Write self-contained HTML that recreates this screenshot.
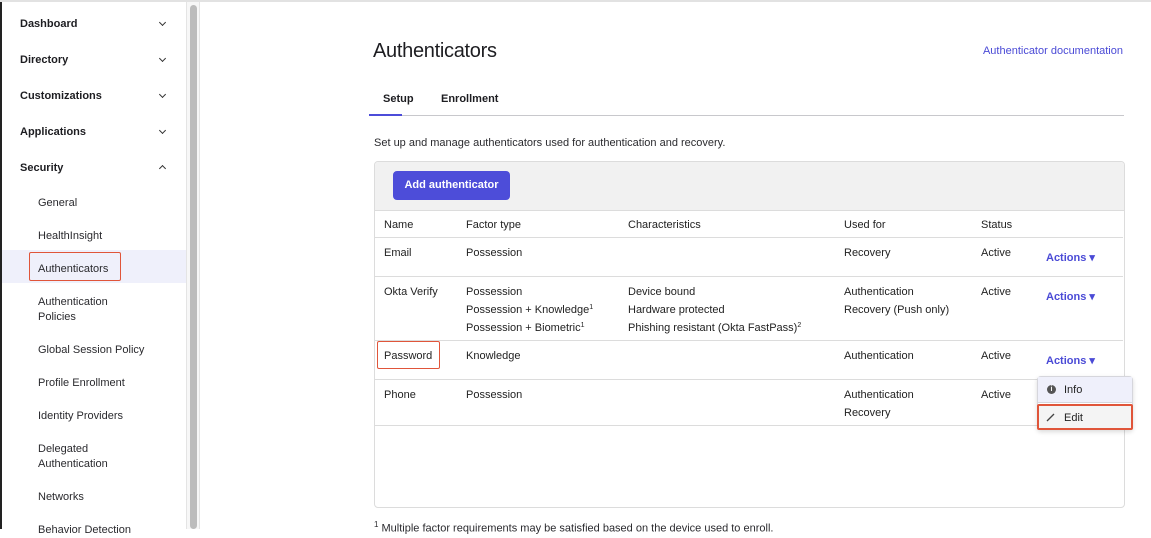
<!DOCTYPE html>
<html><head><meta charset="utf-8"><style>
*{margin:0;padding:0;box-sizing:border-box}
body{width:1151px;height:529px;overflow:hidden;background:#fff;font-family:"Liberation Sans",Arial,sans-serif;color:#1d1d21;position:relative;font-size:11px}
.a{position:absolute;white-space:nowrap}
.nav{font-weight:bold;font-size:11px;left:20px}
.chev{position:absolute;left:160px;width:5px;height:5px;border-right:1.2px solid #333;border-bottom:1.2px solid #333;transform:rotate(45deg)}
.sub{left:38px;font-size:11px;color:#2a2a2e;line-height:15px}
.c{position:absolute;font-size:11px;line-height:18px;color:#222}
.c sup{font-size:7px;line-height:0;vertical-align:4px}
.act{color:#4a4ad6;font-weight:bold;font-size:11px}
.hl{position:absolute;height:1px;background:#dcdcdc;left:375px;width:748px}
</style></head><body>
<div class="a" style="left:0;top:0;width:2px;height:529px;background:#222"></div>
<div class="a" style="left:0;top:0;width:1151px;height:2px;background:#e2e2e2"></div>
<!-- sidebar -->
<div class="a" style="left:2px;top:250px;width:184px;height:33px;background:#eff0fb"></div>
<div class="a nav" style="top:18px">Dashboard</div><div class="chev" style="top:20px"></div>
<div class="a nav" style="top:54px">Directory</div><div class="chev" style="top:56px"></div>
<div class="a nav" style="top:90px">Customizations</div><div class="chev" style="top:92px"></div>
<div class="a nav" style="top:126px">Applications</div><div class="chev" style="top:128px"></div>
<div class="a nav" style="top:162px">Security</div><div class="chev" style="top:166px;transform:rotate(225deg)"></div>
<div class="a sub" style="top:196px">General</div>
<div class="a sub" style="top:229px">HealthInsight</div>
<div class="a sub" style="top:262px">Authenticators</div>
<div class="a" style="left:29px;top:252px;width:92px;height:29px;border:1.5px solid #e0553a;border-radius:2px"></div>
<div class="a sub" style="top:295px">Authentication<br>Policies</div>
<div class="a sub" style="top:343px">Global Session Policy</div>
<div class="a sub" style="top:376px">Profile Enrollment</div>
<div class="a sub" style="top:409px">Identity Providers</div>
<div class="a sub" style="top:442px">Delegated<br>Authentication</div>
<div class="a sub" style="top:490px">Networks</div>
<div class="a sub" style="top:523px">Behavior Detection</div>
<div class="a" style="left:186px;top:2px;width:14px;height:527px;background:#f7f7f7;border-left:1px solid #e4e4e4;border-right:1px solid #e4e4e4"></div>
<div class="a" style="left:190px;top:5px;width:7px;height:524px;background:#bcbcbc;border-radius:4px"></div>
<!-- main -->
<div class="a" style="left:373px;top:40px;font-size:20px;color:#1d1d21;letter-spacing:-0.3px">Authenticators</div>
<div class="a" style="right:28px;top:45px;font-size:11px;color:#4a4ad6">Authenticator documentation</div>
<div class="a" style="left:383px;top:93px;font-weight:bold;font-size:11px">Setup</div>
<div class="a" style="left:441px;top:93px;font-weight:bold;font-size:11px">Enrollment</div>
<div class="a" style="left:374px;top:115px;width:750px;height:1px;background:#c8c8cc"></div>
<div class="a" style="left:369px;top:114px;width:33px;height:2px;background:#4c4cd9"></div>
<div class="a" style="left:374px;top:137px;font-size:11px;color:#2a2a2e">Set up and manage authenticators used for authentication and recovery.</div>
<div class="a" style="left:374px;top:161px;width:751px;height:347px;border:1px solid #dcdcdc;border-radius:4px;overflow:hidden">
 <div style="height:49px;background:#f1f1f1;border-bottom:1px solid #dcdcdc"></div>
</div>
<div class="a" style="left:393px;top:171px;width:117px;height:29px;background:#4d4dd9;border-radius:4px;color:#fff;font-weight:bold;font-size:11px;text-align:center;line-height:29px">Add authenticator</div>
<div class="hl" style="top:237px"></div>
<div class="hl" style="top:276px"></div>
<div class="hl" style="top:340px"></div>
<div class="hl" style="top:379px"></div>
<div class="hl" style="top:425px"></div>
<div class="c" style="left:384px;top:216px">Name</div>
<div class="c" style="left:466px;top:216px">Factor type</div>
<div class="c" style="left:628px;top:216px">Characteristics</div>
<div class="c" style="left:844px;top:216px">Used for</div>
<div class="c" style="left:981px;top:216px">Status</div>

<div class="c" style="left:384px;top:244px">Email</div>
<div class="c" style="left:466px;top:244px">Possession</div>
<div class="c" style="left:844px;top:244px">Recovery</div>
<div class="c" style="left:981px;top:244px">Active</div>
<div class="c act" style="left:1046px;top:249px">Actions &#9662;</div>

<div class="c" style="left:384px;top:283px">Okta Verify</div>
<div class="c" style="left:466px;top:283px">Possession<br>Possession + Knowledge<sup>1</sup><br>Possession + Biometric<sup>1</sup></div>
<div class="c" style="left:628px;top:283px">Device bound<br>Hardware protected<br>Phishing resistant (Okta FastPass)<sup>2</sup></div>
<div class="c" style="left:844px;top:283px">Authentication<br>Recovery (Push only)</div>
<div class="c" style="left:981px;top:283px">Active</div>
<div class="c act" style="left:1046px;top:288px">Actions &#9662;</div>

<div class="c" style="left:384px;top:347px">Password</div>
<div class="a" style="left:377px;top:341px;width:63px;height:28px;border:1.5px solid #e0553a;border-radius:2px"></div>
<div class="c" style="left:466px;top:347px">Knowledge</div>
<div class="c" style="left:844px;top:347px">Authentication</div>
<div class="c" style="left:981px;top:347px">Active</div>
<div class="c act" style="left:1046px;top:352px">Actions &#9662;</div>

<div class="c" style="left:384px;top:386px">Phone</div>
<div class="c" style="left:466px;top:386px">Possession</div>
<div class="c" style="left:844px;top:386px">Authentication<br>Recovery</div>
<div class="c" style="left:981px;top:386px">Active</div>

<!-- dropdown -->
<div class="a" style="left:1037px;top:376px;width:96px;height:54px;background:#fff;border:1px solid #d6d6dc;border-radius:4px;box-shadow:0 2px 5px rgba(0,0,0,.15)">
 <div style="height:26px;background:#eff0fb;border-bottom:1px solid #d6d6dc"></div>
</div>
<div class="a" style="left:1047px;top:385px;width:9px;height:9px;border-radius:50%;background:#555;color:#fff;font-size:7px;font-weight:bold;text-align:center;line-height:9px">i</div>
<div class="c" style="left:1064px;top:381px">Info</div>
<div class="a" style="left:1037px;top:404px;width:96px;height:26px;border:2px solid #e0553a;border-radius:2px;background:#f4f4f4"></div>
<svg class="a" style="left:1046px;top:412px" width="10" height="10"><path d="M1 9 L8 2" stroke="#444" stroke-width="1.3"/></svg>
<div class="c" style="left:1064px;top:409px">Edit</div>
<div class="a" style="left:374px;top:520px;font-size:11px;color:#2a2a2e"><sup style="font-size:8px">1</sup> Multiple factor requirements may be satisfied based on the device used to enroll.</div>
</body></html>
